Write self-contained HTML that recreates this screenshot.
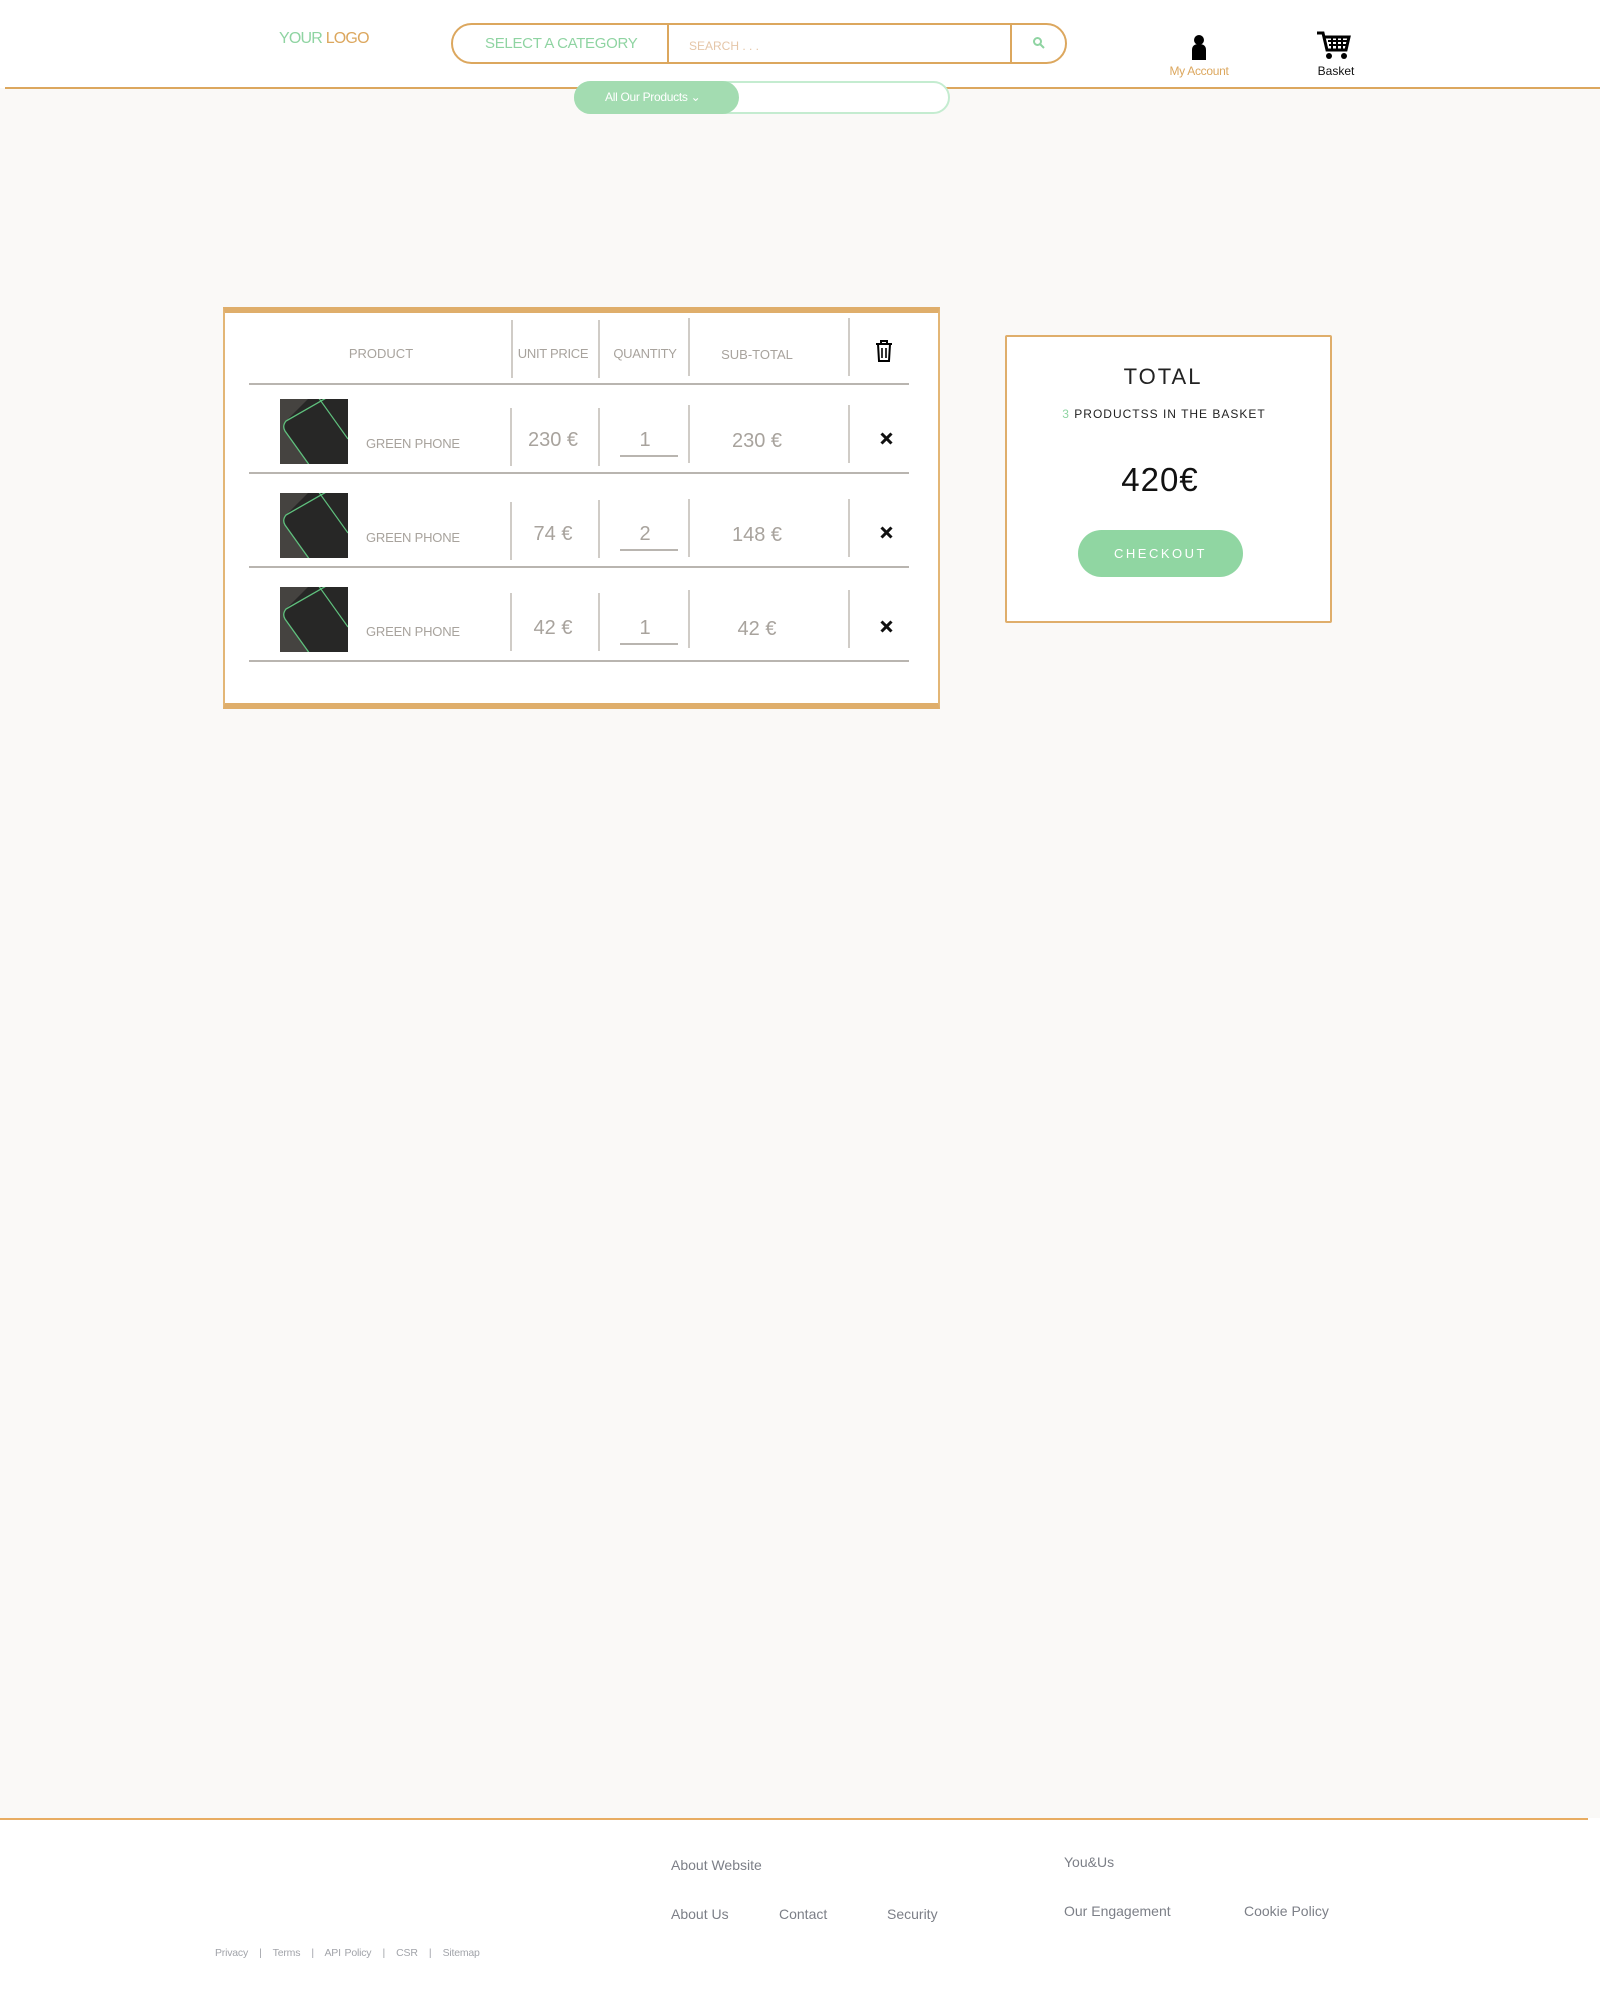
<!DOCTYPE html>
<html><head><meta charset="utf-8"><style>
*{box-sizing:border-box;margin:0;padding:0}
body{width:1600px;height:1994px;background:#faf9f7;font-family:"Liberation Sans",sans-serif;position:relative;overflow:hidden}
.a{position:absolute;white-space:nowrap}
.hdr{position:absolute;left:0;top:0;width:1600px;height:88px;background:#fff}
.gray{color:#a8a39d}
.vl{position:absolute;width:2px;background:#d0ccc7}
.hl{position:absolute;height:2px;background:#b9b5b0}
.ph{position:absolute;width:68px;height:65px;background:#2c2b29;overflow:hidden}
.ph svg{position:absolute;left:0;top:0}
.c{transform:translateX(-50%)}
</style></head><body>
<div class="hdr"></div>
<div class="a" style="left:279px;top:30px;font-size:16px;letter-spacing:-0.8px"><span style="color:#8fd4a2">YOUR </span><span style="color:#dca75e">LOGO</span></div>
<div class="a" style="left:451px;top:23px;width:616px;height:41px;border:2px solid #dca75e;border-radius:21px;background:#fff"></div>
<div class="a" style="left:667px;top:23px;width:2px;height:41px;background:#dca75e"></div>
<div class="a" style="left:1010px;top:23px;width:2px;height:41px;background:#dca75e"></div>
<div class="a" style="left:485px;top:35px;font-size:15px;color:#8fd4a2;letter-spacing:-0.3px">SELECT A CATEGORY</div>
<div class="a" style="left:689px;top:39px;font-size:12px;color:#e5c6a8">SEARCH . . .</div>
<svg class="a" style="left:1032px;top:36px" width="14" height="14" viewBox="0 0 14 14"><circle cx="5.5" cy="5.5" r="3.5" fill="none" stroke="#8fd4a2" stroke-width="2"/><path d="M8 8l4 4" stroke="#8fd4a2" stroke-width="2"/></svg>
<svg class="a" style="left:1188px;top:34px" width="22" height="26" viewBox="0 0 22 26"><circle cx="11" cy="6" r="5" fill="#000"/><path d="M4 26V16q0-6 7-6t7 6v10z" fill="#000"/></svg>
<div class="a c" style="left:1199px;top:64px;font-size:12px;color:#dca75e;letter-spacing:-0.3px">My Account</div>
<svg class="a" style="left:1316px;top:30px" width="36" height="30" viewBox="0 0 36 30"><path d="M1 3h6l4 17h19l3-13H9" fill="none" stroke="#000" stroke-width="3"/><path d="M12 11h19M13 15h17M16 8v11M21 8v11M26 8v11" stroke="#000" stroke-width="2"/><circle cx="13" cy="26" r="3" fill="#000"/><circle cx="28" cy="26" r="3" fill="#000"/></svg>
<div class="a c" style="left:1336px;top:64px;font-size:12px;color:#111">Basket</div>
<div class="a" style="left:5px;top:87px;width:1595px;height:2px;background:#dca75e"></div>
<div class="a" style="left:574px;top:81px;width:376px;height:33px;border:2px solid #c4ecd0;border-radius:17px;background:#fff"></div>
<div class="a" style="left:574px;top:81px;width:165px;height:33px;border-radius:17px;background:#a3dcb1"></div>
<div class="a" style="left:605px;top:90px;font-size:12px;color:#fff;letter-spacing:-0.3px">All Our Products &#8964;</div>

<div class="a" style="left:223px;top:307px;width:717px;height:402px;background:#fff;border:2px solid #e3b676;border-top:6px solid #dfae6b;border-bottom:6px solid #dfae6b"></div>
<div class="a gray c" style="left:381px;top:346px;font-size:13px">PRODUCT</div>
<div class="a gray c" style="left:553px;top:346px;font-size:13px;letter-spacing:-0.3px">UNIT PRICE</div>
<div class="a gray c" style="left:645px;top:346px;font-size:13px;letter-spacing:-0.3px">QUANTITY</div>
<div class="a gray c" style="left:757px;top:347px;font-size:13px">SUB-TOTAL</div>
<svg class="a" style="left:875px;top:340px" width="18" height="22" viewBox="0 0 18 22"><path d="M1 4h16M6 4V1h6v3M3 4l1 17h10l1-17" fill="none" stroke="#000" stroke-width="2"/><path d="M7 8v10M11 8v10" stroke="#000" stroke-width="1.6"/></svg>
<div class="vl" style="left:511px;top:320px;height:58px"></div>
<div class="vl" style="left:598px;top:320px;height:58px"></div>
<div class="vl" style="left:688px;top:318px;height:58px"></div>
<div class="vl" style="left:848px;top:318px;height:58px"></div>
<div class="hl" style="left:249px;top:383px;width:660px"></div>

<div class="hl" style="left:249px;top:472px;width:660px"></div>
<div class="hl" style="left:249px;top:566px;width:660px"></div>
<div class="hl" style="left:249px;top:660px;width:660px"></div>

<div class="ph" style="left:280px;top:399px"><svg width="68" height="65"><rect width="68" height="65" fill="#454340"/><path d="M30 -2L6 22Q2 27 5 32L30 67H70V-2z" fill="#272726"/><path d="M48 -2L6 22Q2 27 5 32L30 67" fill="none" stroke="#5fc07d" stroke-width="1.3"/><path d="M38 -2L68 40" stroke="#5fc07d" stroke-width="1.2"/></svg></div>
<div class="ph" style="left:280px;top:493px"><svg width="68" height="65"><rect width="68" height="65" fill="#454340"/><path d="M30 -2L6 22Q2 27 5 32L30 67H70V-2z" fill="#272726"/><path d="M48 -2L6 22Q2 27 5 32L30 67" fill="none" stroke="#5fc07d" stroke-width="1.3"/><path d="M38 -2L68 40" stroke="#5fc07d" stroke-width="1.2"/></svg></div>
<div class="ph" style="left:280px;top:587px"><svg width="68" height="65"><rect width="68" height="65" fill="#454340"/><path d="M30 -2L6 22Q2 27 5 32L30 67H70V-2z" fill="#272726"/><path d="M48 -2L6 22Q2 27 5 32L30 67" fill="none" stroke="#5fc07d" stroke-width="1.3"/><path d="M38 -2L68 40" stroke="#5fc07d" stroke-width="1.2"/></svg></div>

<div class="a gray" style="left:366px;top:436px;font-size:13px;letter-spacing:-0.2px">GREEN PHONE</div>
<div class="a gray" style="left:366px;top:530px;font-size:13px;letter-spacing:-0.2px">GREEN PHONE</div>
<div class="a gray" style="left:366px;top:624px;font-size:13px;letter-spacing:-0.2px">GREEN PHONE</div>

<div class="a gray c" style="left:553px;top:429px;font-size:20px">230 €</div>
<div class="a gray c" style="left:553px;top:523px;font-size:20px">74 €</div>
<div class="a gray c" style="left:553px;top:617px;font-size:20px">42 €</div>
<div class="a gray c" style="left:645px;top:429px;font-size:20px">1</div>
<div class="a gray c" style="left:645px;top:523px;font-size:20px">2</div>
<div class="a gray c" style="left:645px;top:617px;font-size:20px">1</div>
<div class="hl" style="left:620px;top:455px;width:58px"></div>
<div class="hl" style="left:620px;top:549px;width:58px"></div>
<div class="hl" style="left:620px;top:643px;width:58px"></div>
<div class="a gray c" style="left:757px;top:430px;font-size:20px">230 €</div>
<div class="a gray c" style="left:757px;top:524px;font-size:20px">148 €</div>
<div class="a gray c" style="left:757px;top:618px;font-size:20px">42 €</div>

<div class="vl" style="left:510px;top:408px;height:58px"></div><div class="vl" style="left:598px;top:408px;height:58px"></div><div class="vl" style="left:688px;top:405px;height:58px"></div><div class="vl" style="left:848px;top:405px;height:58px"></div>
<div class="vl" style="left:510px;top:502px;height:58px"></div><div class="vl" style="left:598px;top:500px;height:58px"></div><div class="vl" style="left:688px;top:499px;height:58px"></div><div class="vl" style="left:848px;top:499px;height:58px"></div>
<div class="vl" style="left:510px;top:593px;height:58px"></div><div class="vl" style="left:598px;top:593px;height:58px"></div><div class="vl" style="left:688px;top:590px;height:58px"></div><div class="vl" style="left:848px;top:590px;height:58px"></div>

<svg class="a" style="left:880px;top:432px" width="13" height="13" viewBox="0 0 13 13"><path d="M1.5 1.5l10 10M11.5 1.5l-10 10" stroke="#111" stroke-width="3"/></svg>
<svg class="a" style="left:880px;top:526px" width="13" height="13" viewBox="0 0 13 13"><path d="M1.5 1.5l10 10M11.5 1.5l-10 10" stroke="#111" stroke-width="3"/></svg>
<svg class="a" style="left:880px;top:620px" width="13" height="13" viewBox="0 0 13 13"><path d="M1.5 1.5l10 10M11.5 1.5l-10 10" stroke="#111" stroke-width="3"/></svg>

<div class="a" style="left:1005px;top:335px;width:327px;height:288px;background:#fff;border:2px solid #dfae6b;border-radius:2px"></div>
<div class="a c" style="left:1163px;top:364px;font-size:22px;letter-spacing:2px;color:#222">TOTAL</div>
<div class="a c" style="left:1164px;top:407px;font-size:12px;letter-spacing:1px;color:#222"><span style="color:#8fd4a2">3</span> PRODUCTSS IN THE BASKET</div>
<div class="a c" style="left:1160px;top:461px;font-size:33px;letter-spacing:1px;color:#111">420€</div>
<div class="a" style="left:1078px;top:530px;width:165px;height:47px;border-radius:24px;background:#90d6a2;color:#fff;font-size:13px;letter-spacing:2.5px;text-align:center;line-height:47px">CHECKOUT</div>

<div class="a" style="left:0;top:1818px;width:1600px;height:176px;background:#fff"></div>
<div class="a" style="left:0;top:1818px;width:1588px;height:2px;background:#e8ad62"></div>
<div class="a" style="left:671px;top:1857px;font-size:14px;color:#7c7f87">About Website</div>
<div class="a" style="left:671px;top:1906px;font-size:14px;color:#7c7f87">About Us</div>
<div class="a" style="left:779px;top:1906px;font-size:14px;color:#7c7f87">Contact</div>
<div class="a" style="left:887px;top:1906px;font-size:14px;color:#7c7f87">Security</div>
<div class="a" style="left:1064px;top:1854px;font-size:14px;color:#7c7f87">You&amp;Us</div>
<div class="a" style="left:1064px;top:1903px;font-size:14px;color:#7c7f87">Our Engagement</div>
<div class="a" style="left:1244px;top:1903px;font-size:14px;color:#7c7f87">Cookie Policy</div>
<div class="a" style="left:215px;top:1947px;font-size:10.5px;color:#a2a4aa;letter-spacing:-0.2px;word-spacing:1px">Privacy &nbsp; | &nbsp; Terms &nbsp; | &nbsp; API Policy &nbsp; | &nbsp; CSR &nbsp; | &nbsp; Sitemap</div>
</body></html>
